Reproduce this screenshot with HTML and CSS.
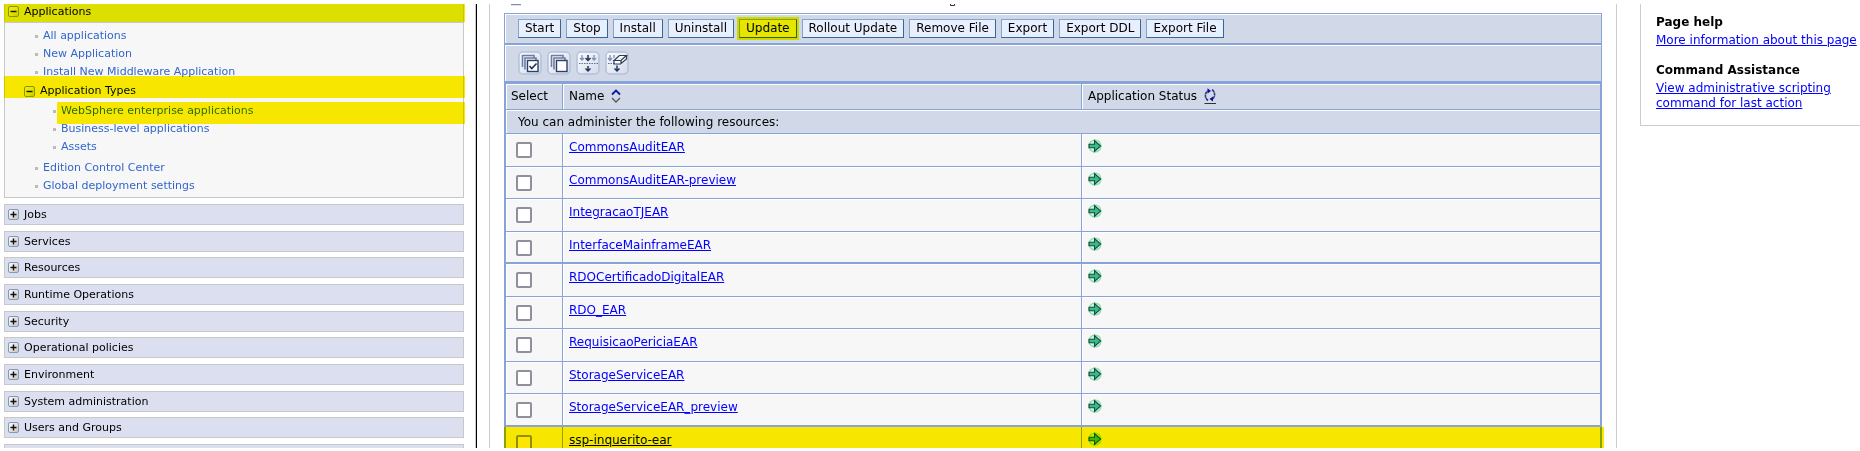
FILE: index.html
```
<!DOCTYPE html>
<html lang="en">
<head>
<meta charset="utf-8">
<title>Enterprise Applications</title>
<link rel="stylesheet" href="styles.css">
</head>
<body>
<svg width="0" height="0" class="defs" aria-hidden="true">
  <defs>
    <linearGradient id="face" x1="0" y1="0" x2="1" y2="1"><stop offset="0" stop-color="#fff"/><stop offset="1" stop-color="#c9c3b8"/></linearGradient>
    <linearGradient id="btn" x1="0" y1="0" x2="1" y2="1"><stop offset="0" stop-color="#fbfcfe"/><stop offset="1" stop-color="#d3dbe9"/></linearGradient>
    <symbol id="plus" viewBox="0 0 11 11"><rect x="0.5" y="0.5" width="10" height="10" rx="1.5" fill="url(#face)" stroke="#7d9bbd"/><path d="M2.500 5.500h6M5.500 2.500v6" stroke="#111" stroke-width="1.400"/></symbol>
    <symbol id="minus" viewBox="0 0 11 11"><rect x="0.5" y="0.5" width="10" height="10" rx="1.5" fill="url(#face)" stroke="#7d9bbd"/><path d="M2.500 5.500h6" stroke="#111" stroke-width="1.400"/></symbol>
    <symbol id="started" viewBox="0 0 14 14"><circle cx="7" cy="7" r="6.5" fill="#d3f5e0"/><circle cx="7" cy="7" r="6" fill="none" stroke="#7fe0b4" stroke-width="1.2"/><path d="M1 5.200h5.500V1.500L12.600 7l-6.100 5.500V8.800H1z" fill="#2fbf8a" stroke="#25453c" stroke-width="1.100"/></symbol>
  </defs>
</svg>
<div class="console">
  <nav class="sidebar">
    <section class="group open">
      <button class="group-title marked"><svg class="box"><use href="#minus"/></svg>Applications</button>
      <div class="group-body">
        <ul class="links">
          <li><a href="#">All applications</a></li>
          <li><a href="#">New Application</a></li>
          <li><a href="#">Install New Middleware Application</a></li>
        </ul>
        <button class="subgroup marked"><svg class="box"><use href="#minus"/></svg>Application Types</button>
        <ul class="links nested">
          <li class="marked"><a href="#">WebSphere enterprise applications</a></li>
          <li><a href="#">Business-level applications</a></li>
          <li><a href="#">Assets</a></li>
        </ul>
        <ul class="links">
          <li><a href="#">Edition Control Center</a></li>
          <li><a href="#">Global deployment settings</a></li>
        </ul>
      </div>
    </section>
    <div class="closed-groups">
      <button class="group-title"><svg class="box"><use href="#plus"/></svg>Jobs</button>
      <button class="group-title"><svg class="box"><use href="#plus"/></svg>Services</button>
      <button class="group-title"><svg class="box"><use href="#plus"/></svg>Resources</button>
      <button class="group-title"><svg class="box"><use href="#plus"/></svg>Runtime Operations</button>
      <button class="group-title"><svg class="box"><use href="#plus"/></svg>Security</button>
      <button class="group-title"><svg class="box"><use href="#plus"/></svg>Operational policies</button>
      <button class="group-title"><svg class="box"><use href="#plus"/></svg>Environment</button>
      <button class="group-title"><svg class="box"><use href="#plus"/></svg>System administration</button>
      <button class="group-title"><svg class="box"><use href="#plus"/></svg>Users and Groups</button>
      <button class="group-title" aria-label="More"></button>
    </div>
  </nav>
  <main class="content">
    <div class="cut-row" aria-hidden="true"><svg width="12" height="2"><path d="M1 0.500h10" stroke="#7d93b5" stroke-width="1.500"/></svg><svg width="6" height="2"><path d="M0.500 0v1.500h4V0" fill="none" stroke="#333"/></svg></div>
    <div class="panel">
      <div class="actions">
        <button>Start</button><button>Stop</button><button>Install</button><button>Uninstall</button><button class="marked">Update</button><button>Rollout Update</button><button>Remove File</button><button>Export</button><button>Export DDL</button><button>Export File</button>
      </div>
      <div class="tools">
        <button aria-label="Select all"><svg viewBox="0 0 24 24"><rect x="1" y="1" width="22" height="22" rx="4" fill="url(#btn)" stroke="#b2c1da" stroke-width="1.500"/><path d="M4.500 16V4.500H16V7M7 18.500V7h11v2.500" fill="none" stroke="#6c7ea3" stroke-width="1.600"/><rect x="9.500" y="9.500" width="10.500" height="11" fill="#fff" stroke="#2d3f69" stroke-width="1.400"/><path d="M11.500 15l2.300 2.600 4.700-5" fill="none" stroke="#1d2b50" stroke-width="1.500"/></svg></button>
        <button aria-label="Deselect all"><svg viewBox="0 0 24 24"><rect x="1" y="1" width="22" height="22" rx="4" fill="url(#btn)" stroke="#b2c1da" stroke-width="1.500"/><path d="M4.500 16V4.500H16V7M7 18.500V7h11v2.500" fill="none" stroke="#6c7ea3" stroke-width="1.600"/><rect x="9.500" y="9.500" width="10.500" height="11" fill="#fff" stroke="#2d3f69" stroke-width="1.400"/></svg></button>
        <button aria-label="Show filter"><svg viewBox="0 0 24 24"><rect x="1" y="1" width="22" height="22" rx="4" fill="url(#btn)" stroke="#b2c1da" stroke-width="1.500"/><path d="M6 4v5M4 7l2 2 2-2M18 4v5M16 7l2 2 2-2" fill="none" stroke="#7d90b3" stroke-width="1.300"/><path d="M12 4v5M9.500 7l2.500 2.500L14.500 7M12 15v5M9.500 17.500L12 20l2.500-2.500" fill="none" stroke="#24365f" stroke-width="1.500"/><path d="M3 12.500h19" stroke="#5d719b" stroke-width="1.200" stroke-dasharray="1.500 1"/></svg></button>
        <button aria-label="Clear filter"><svg viewBox="0 0 24 24"><rect x="1" y="1" width="22" height="22" rx="4" fill="url(#btn)" stroke="#b2c1da" stroke-width="1.500"/><path d="M5 4v5M3 7l2 2.500L7 7M9 4v3" fill="none" stroke="#7d90b3" stroke-width="1.300"/><path d="M3 12.500h6" stroke="#5d719b" stroke-width="1.200" stroke-dasharray="1.500 1"/><path d="M9 9.500l5.500-5h7L16 9.500zM9 9.500V13h6.500l6-5V4.500M16 9.500V13" fill="#fff" stroke="#2f3b52" stroke-width="1.200"/><path d="M12 14.500V20M9.500 17.500L12 20l2.500-2.500" fill="none" stroke="#24365f" stroke-width="1.500"/></svg></button>
      </div>
      <table class="apps">
        <thead>
          <tr><th class="pick" scope="col">Select</th><th scope="col"><span class="head">Name <svg class="sort" viewBox="0 0 10 14"><path d="M1 5.500l4-4 4 4" fill="none" stroke="#0a1a9a" stroke-width="1.800"/><path d="M1 9l4 4 4-4" fill="none" stroke="#555" stroke-width="1.300"/></svg></span></th><th scope="col"><span class="head">Application Status <svg class="refresh" viewBox="0 0 12 16"><path d="M4 12.500C0.500 10 0.500 5 4 2.800M8 1.800c3.500 2.200 3.500 7.500 0 9.700" fill="none" stroke="#303a78" stroke-width="1.600" stroke-dasharray="3 .6"/><path d="M3.500 0.200L7 3 3.500 5.500zM9 8.500v5L5.500 11z" fill="#0c0ca0"/><path d="M0.500 15.500h11.500" stroke="#333"/></svg></span></th></tr>
          <tr class="note"><td colspan="3">You can administer the following resources:</td></tr>
        </thead>
        <tbody>
          <tr><td><input type="checkbox" aria-label="CommonsAuditEAR"></td><td><a href="#">CommonsAuditEAR</a></td><td><svg class="status"><use href="#started"/></svg></td></tr>
          <tr><td><input type="checkbox" aria-label="CommonsAuditEAR-preview"></td><td><a href="#">CommonsAuditEAR-preview</a></td><td><svg class="status"><use href="#started"/></svg></td></tr>
          <tr><td><input type="checkbox" aria-label="IntegracaoTJEAR"></td><td><a href="#">IntegracaoTJEAR</a></td><td><svg class="status"><use href="#started"/></svg></td></tr>
          <tr class="heavy"><td><input type="checkbox" aria-label="InterfaceMainframeEAR"></td><td><a href="#">InterfaceMainframeEAR</a></td><td><svg class="status"><use href="#started"/></svg></td></tr>
          <tr><td><input type="checkbox" aria-label="RDOCertificadoDigitalEAR"></td><td><a href="#">RDOCertificadoDigitalEAR</a></td><td><svg class="status"><use href="#started"/></svg></td></tr>
          <tr><td><input type="checkbox" aria-label="RDO_EAR"></td><td><a href="#">RDO_EAR</a></td><td><svg class="status"><use href="#started"/></svg></td></tr>
          <tr><td><input type="checkbox" aria-label="RequisicaoPericiaEAR"></td><td><a href="#">RequisicaoPericiaEAR</a></td><td><svg class="status"><use href="#started"/></svg></td></tr>
          <tr><td><input type="checkbox" aria-label="StorageServiceEAR"></td><td><a href="#">StorageServiceEAR</a></td><td><svg class="status"><use href="#started"/></svg></td></tr>
          <tr class="heavy"><td><input type="checkbox" aria-label="StorageServiceEAR_preview"></td><td><a href="#">StorageServiceEAR_preview</a></td><td><svg class="status"><use href="#started"/></svg></td></tr>
          <tr><td class="marked"><input type="checkbox" aria-label="ssp-inquerito-ear"></td><td class="marked"><a href="#">ssp-inquerito-ear</a></td><td class="marked"><svg class="status"><use href="#started"/></svg></td></tr>
        </tbody>
      </table>
    </div>
  </main>
  <aside class="help">
    <h2>Page help</h2>
    <a href="#">More information about this page</a>
    <h2>Command Assistance</h2>
    <a href="#">View administrative scripting<br>command for last action</a>
  </aside>
</div>
</body>
</html>
```
FILE: styles.css
```
* { box-sizing: border-box; }
html { background: #fff; }
body {
  margin: 0;
  padding: 4px 0 3px;
  height: 100vh;
  overflow: hidden;
  background: #fff;
  color: #000;
  font: 12px/16px "DejaVu Sans", sans-serif;
}
button { font: inherit; color: inherit; margin: 0; }
ul { list-style: none; margin: 0; padding: 0; }
.defs { position: absolute; }
.console { display: flex; height: 100%; overflow: hidden; align-items: flex-start; }

/* highlighter strokes */
.marked { position: relative; }
.marked::after {
  content: "";
  position: absolute;
  inset: 0;
  background: #ffe600;
  mix-blend-mode: darken;
  pointer-events: none;
}

/* navigation */
.sidebar {
  flex: 0 0 477px;
  height: 100%;
  overflow: hidden;
  padding: 0 12px 0 4px;
  border-right: 1px solid #000;
  box-shadow: inset -1px 0 #ccc;
  font-size: 11px;
  line-height: 14px;
}
.box { width: 11px; height: 11px; flex: none; }
.group-title {
  display: flex;
  align-items: center;
  gap: 5px;
  width: 100%;
  height: 21px;
  padding: 0 3px;
  border: 1px solid #c8c8c8;
  background: #dcdff0;
  text-align: left;
}
.open > .group-title { height: 19px; padding-bottom: 3px; border-top: 0; }
.open > .group-title::after { inset: 0 -2px 0 -1px; }
.group-body {
  border: 1px solid #c8c8c8;
  border-top: 0;
  background: #f7f7f7;
  padding: 4px 0 2px;
}
.links { padding-left: 30px; }
.links.nested { padding: 4px 0 3px 48px; }
.links li { display: flex; align-items: center; gap: 5px; height: 18px; }
.links li::before { content: ""; width: 3px; height: 3px; background: #bbb; }
.links a { color: #3366cc; text-decoration: none; }
.links .marked::after { inset: 0 -2px -4px 4px; }
.subgroup {
  display: flex;
  align-items: center;
  gap: 5px;
  width: 100%;
  height: 17px;
  padding: 3px 0 0 19px;
  border: 0;
  background: none;
}
.subgroup::after { inset: -5px -2px 0 -1px; }
.closed-groups { padding-top: 6px; }
.closed-groups .group-title { margin-bottom: 6px; }
.closed-groups .group-title:nth-child(3n + 2) { margin-bottom: 5px; }

/* application list */
.content {
  flex: 1;
  min-width: 0;
  height: 100%;
  margin-left: 12px;
  padding: 0 14px;
  border: solid #ccc;
  border-width: 0 1px;
}
.cut-row { display: flex; gap: 428px; height: 9px; padding-left: 6px; }
.panel { background: #d1d8e8; }
.actions, .tools {
  display: flex;
  border: 1px solid #87a3d8;
  box-shadow: inset 1px 1px #fff;
}
.actions { gap: 5px; height: 30px; padding: 5px 13px; border-bottom: 0; }
.actions button {
  height: 19px;
  padding: 0 6px;
  border: 1px solid #336699;
  border-color: #7fa5cc #336699 #336699 #7fa5cc;
  background: #e8f0ff;
  line-height: 17px;
  white-space: nowrap;
}
.actions .marked::after { inset: -3px; }
.tools { gap: 5px; height: 41px; padding: 6px 13px; border-top-width: 2px; border-bottom-width: 3px; }
.tools button { padding: 0; border: 0; background: none; height: 24px; }
.tools svg { display: block; width: 24px; height: 24px; }
.apps {
  width: 100%;
  table-layout: fixed;
  border-collapse: separate;
  border-spacing: 0;
  border: solid #87a3d8;
  border-width: 0 2px;
}
.apps th, .apps td {
  padding: 0 6px;
  border-bottom: 1px solid #87a3d8;
  box-shadow: inset 1px 1px #fff;
  font-weight: normal;
  text-align: left;
}
.apps th + th, .apps td + td { border-left: 1px solid #87a3d8; }
.apps th { height: 26px; padding: 0 6px 2px 5px; }
.apps th + th { padding-left: 6px; }
.apps th.pick { width: 56px; }
.head { display: flex; align-items: center; gap: 7px; }
.sort { width: 10px; height: 14px; }
.refresh { width: 12px; height: 16px; }
.apps .note td { height: 24px; padding: 0 12px; }
.apps tbody td { height: 33px; background: #f7f7f7; vertical-align: top; padding-top: 5px; }
.apps tbody tr:nth-child(even) td { height: 32px; }
.apps tbody td:first-child { padding: 8px 10px 0; }
.apps tbody .heavy td { border-bottom-width: 2px; }
.apps input {
  appearance: none;
  display: block;
  width: 16px;
  height: 16px;
  margin: 0;
  border: 2px solid #8f8f9d;
  border-radius: 2px;
  background: #fff;
}
.status { display: block; width: 14px; height: 14px; }
.apps .marked::after { left: -1px; }
.apps .marked:first-child::after { left: -2px; }
.apps .marked:last-child::after { right: -4px; }
a { color: #0000ff; }

/* help */
.help {
  flex: 0 0 220px;
  margin-left: 23px;
  padding: 11px 0 14px 15px;
  border: solid #ccc;
  border-width: 0 0 1px 1px;
  line-height: 15px;
  white-space: nowrap;
}
.help h2 { margin: 0 0 3px; font-size: 12px; line-height: 15px; }
.help a + h2 { margin-top: 15px; }
```
